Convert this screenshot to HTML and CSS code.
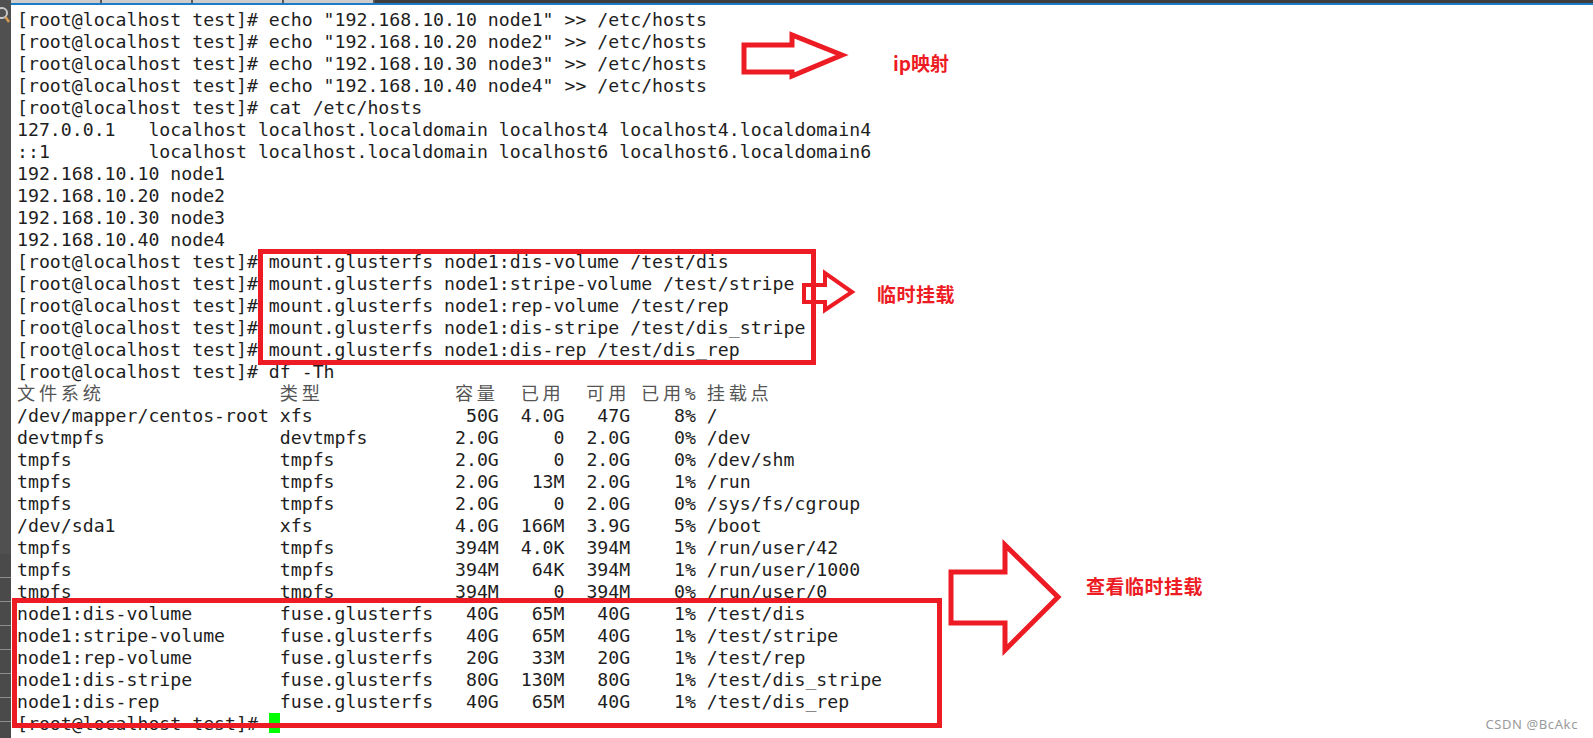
FILE: index.html
```html
<!DOCTYPE html>
<html lang="zh-CN">
<head>
    <meta charset="UTF-8">
    <title>glusterfs 临时挂载</title>
    <link rel="stylesheet" href="styles.css">
</head>
<body>

<div class="screen">
    <div class="side">
        <svg class="find" width="11" height="22" viewBox="0 0 11 22">
            <circle cx="2" cy="8" r="5" fill="none" stroke="#c9c9c9" stroke-width="2"/>
            <line x1="5.5" y1="12" x2="9" y2="17" stroke="#d39b52" stroke-width="2.5"/>
        </svg>
        <div class="rows"></div>
    </div>

    <div class="main">
        <div class="tabs"><span></span><span></span><span></span><span></span></div>
<pre class="term">
[root@localhost test]# echo "192.168.10.10 node1" >> /etc/hosts
[root@localhost test]# echo "192.168.10.20 node2" >> /etc/hosts
[root@localhost test]# echo "192.168.10.30 node3" >> /etc/hosts
[root@localhost test]# echo "192.168.10.40 node4" >> /etc/hosts
[root@localhost test]# cat /etc/hosts
127.0.0.1   localhost localhost.localdomain localhost4 localhost4.localdomain4
::1         localhost localhost.localdomain localhost6 localhost6.localdomain6
192.168.10.10 node1
192.168.10.20 node2
192.168.10.30 node3
192.168.10.40 node4
[root@localhost test]# mount.glusterfs node1:dis-volume /test/dis
[root@localhost test]# mount.glusterfs node1:stripe-volume /test/stripe
[root@localhost test]# mount.glusterfs node1:rep-volume /test/rep
[root@localhost test]# mount.glusterfs node1:dis-stripe /test/dis_stripe
[root@localhost test]# mount.glusterfs node1:dis-rep /test/dis_rep
[root@localhost test]# df -Th
<span class="cjk">文件系统</span>                <span class="cjk">类型</span>            <span class="cjk">容量</span>  <span class="cjk">已用</span>  <span class="cjk">可用</span> <span class="cjk">已用</span><span class="pct">%</span> <span class="cjk">挂载点</span>
/dev/mapper/centos-root xfs              50G  4.0G   47G    8% /
devtmpfs                devtmpfs        2.0G     0  2.0G    0% /dev
tmpfs                   tmpfs           2.0G     0  2.0G    0% /dev/shm
tmpfs                   tmpfs           2.0G   13M  2.0G    1% /run
tmpfs                   tmpfs           2.0G     0  2.0G    0% /sys/fs/cgroup
/dev/sda1               xfs             4.0G  166M  3.9G    5% /boot
tmpfs                   tmpfs           394M  4.0K  394M    1% /run/user/42
tmpfs                   tmpfs           394M   64K  394M    1% /run/user/1000
tmpfs                   tmpfs           394M     0  394M    0% /run/user/0
node1:dis-volume        fuse.glusterfs   40G   65M   40G    1% /test/dis
node1:stripe-volume     fuse.glusterfs   40G   65M   40G    1% /test/stripe
node1:rep-volume        fuse.glusterfs   20G   33M   20G    1% /test/rep
node1:dis-stripe        fuse.glusterfs   80G  130M   80G    1% /test/dis_stripe
node1:dis-rep           fuse.glusterfs   40G   65M   40G    1% /test/dis_rep
[root@localhost test]# <span class="cursor"></span></pre>
    </div>

    <!-- annotations drawn over the terminal -->
    <div class="box box-mount"></div>
    <div class="box box-df"></div>
    <svg class="marks" width="1593" height="738" viewBox="0 0 1593 738">
        <polygon class="arrow" points="744,45 792,45 792,35 842,55 792,76 792,72 744,72"/>
        <polygon class="arrow thin" points="804,285 825,285 825,273 852,292 825,310 825,302 804,302"/>
        <polygon class="arrow" points="951,572 1005,572 1005,545 1058,597 1005,650 1005,623 951,623"/>
    </svg>
    <div class="note note-ip">ip映射</div>
    <div class="note note-mount">临时挂载</div>
    <div class="note note-df">查看临时挂载</div>
    <div class="credit">CSDN @BcAkc</div>
</div>

</body>
</html>
```

FILE: styles.css
```css
body { margin: 0; background: #fff; }
.screen { position: relative; display: flex; height: 738px; overflow: hidden; }
.side { width: 11px; flex: none; background: #505050; display: flex; flex-direction: column; }
.find { margin-top: 5px; }
.side .rows { margin-top: auto; height: 184px; background: repeating-linear-gradient(to bottom, #4a4a4a 0 23px, #8e8e8e 23px 24px); }
.main { flex: 1; display: flex; flex-direction: column; }
.tabs { height: 3px; display: flex; background: #3e3e3e; border-bottom: 2px solid #1b7cc4; }
.tabs span { width: 89px; background: #cdcdcd; border-right: 2px solid #5a5a5a; }
.term { margin: 0; padding: 4px 0 0 6px; font-family: "DejaVu Sans Mono", "Noto Sans CJK SC", monospace; font-size: 18.2px; line-height: 22px; color: #1e1e1e; }
.cjk { color: #555; letter-spacing: calc(2ch - 1em); }
.pct { color: #555; }
.cursor { display: inline-block; width: 1ch; height: 20px; background: #00ff00; vertical-align: top; }

.box { position: absolute; border: 5px solid #ed1c24; }
.box-mount { left: 258px; top: 249px; width: 548px; height: 106px; }
.box-df { left: 12px; top: 598px; width: 920px; height: 120px; }
.marks { position: absolute; left: 0; top: 0; pointer-events: none; }
.arrow { fill: none; stroke: #ed1c24; stroke-width: 5; stroke-linejoin: miter; }
.arrow.thin { stroke-width: 4; }
.note { position: absolute; font-family: "Noto Sans CJK SC", sans-serif; font-weight: bold; font-size: 19px; line-height: 24px; color: #ed1c24; }
.note-ip { left: 893px; top: 51px; }
.note-mount { left: 877px; top: 282px; letter-spacing: 0.5px; }
.note-df { left: 1086px; top: 574px; letter-spacing: 0.5px; }
.credit { position: absolute; right: 15px; top: 716px; font-family: "Noto Sans", sans-serif; font-size: 13px; line-height: 16px; letter-spacing: 0.6px; color: #9a9a9a; }
```
